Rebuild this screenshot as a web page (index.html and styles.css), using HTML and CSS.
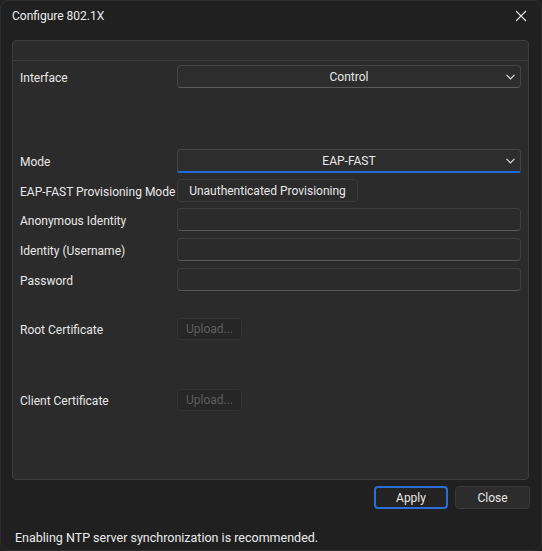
FILE: index.html
```html
<!DOCTYPE html>
<html>
	<head>
		<meta charset="utf-8">
		<title>Configure 802.1X</title>
		<link rel="stylesheet" href="styles.css">
	</head>
	<body>
		<div class="window">
			<div class="titlebar">
				<span class="title">Configure 802.1X</span>
				<svg class="close-x" width="12" height="12" viewBox="0 0 12 12">
					<path d="M1 1 L11 11 M11 1 L1 11" stroke="#e8e8e8" stroke-width="1.1" fill="none"/>
				</svg>
			</div>
			<div class="group">
				<div class="group-head"></div>
				<div class="group-body">
					<div class="row r-interface">
						<span class="label">Interface</span>
						<div class="combo">
							<span>Control</span>
							<svg class="chev" width="9" height="6" viewBox="0 0 9 6"><path d="M0.5 0.8 L4.5 4.8 L8.5 0.8" stroke="#e0e0e0" stroke-width="1.2" fill="none"/></svg>
						</div>
					</div>
					<div class="row r-mode">
						<span class="label">Mode</span>
						<div class="combo focus">
							<span>EAP-FAST</span>
							<svg class="chev" width="9" height="6" viewBox="0 0 9 6"><path d="M0.5 0.8 L4.5 4.8 L8.5 0.8" stroke="#e0e0e0" stroke-width="1.2" fill="none"/></svg>
						</div>
					</div>
					<div class="row r-prov">
						<span class="label">EAP-FAST Provisioning Mode</span>
						<div class="btn prov">Unauthenticated Provisioning</div>
					</div>
					<div class="row r-field first">
						<span class="label">Anonymous Identity</span>
						<div class="input"></div>
					</div>
					<div class="row r-field">
						<span class="label">Identity (Username)</span>
						<div class="input"></div>
					</div>
					<div class="row r-field">
						<span class="label">Password</span>
						<div class="input"></div>
					</div>
					<div class="row r-root">
						<span class="label">Root Certificate</span>
						<div class="btn upload">Upload...</div>
					</div>
					<div class="row r-client">
						<span class="label">Client Certificate</span>
						<div class="btn upload">Upload...</div>
					</div>
				</div>
			</div>
			<div class="actions">
				<div class="btn apply">Apply</div>
				<div class="btn close">Close</div>
			</div>
			<div class="status">Enabling NTP server synchronization is recommended.</div>
		</div>
	</body>
</html>
```

FILE: styles.css
```css
*{
	margin: 0;
	padding: 0;
	box-sizing: border-box;
}

body{
	background-color: #202020;
	font-family: Roboto, "Noto Sans", sans-serif;
	font-size: 12px;
	color: #e8e8e8;
}

.window{
	width: 542px;
	height: 551px;
	background-color: #202020;
	border: 1px solid #2e2e2e;
	border-radius: 8px;
	overflow: hidden;
}

.titlebar{
	height: 29px;
	display: flex;
	align-items: center;
	justify-content: space-between;
	padding: 0 14px 0 11px;
}

.titlebar .title{
	font-size: 12px;
	color: #ececec;
}

.group{
	margin: 10px 12px 0 11px;
	height: 440px;
	background-color: #2b2b2b;
	border: 1px solid #3d3d3d;
	border-radius: 4px;
}

.group-head{
	height: 20px;
	border-bottom: 1px solid #3d3d3d;
}

.group-body{
	padding: 4px 7px 0 7px;
}

.row{
	display: grid;
	grid-template-columns: 157px 1fr;
	align-items: center;
	justify-items: start;
}

.row .label{
	color: #e8e8e8;
	white-space: nowrap;
	padding-top: 2px;
}

.r-mode{ margin-top: 61px; }
.r-prov{ margin-top: 6px; }
.r-field{ margin-top: 7px; }
.r-field.first{ margin-top: 6px; }
.r-root{ margin-top: 27px; }
.r-client{ margin-top: 49px; }

.combo{
	position: relative;
	justify-self: stretch;
	height: 23px;
	background-color: #2d2d2d;
	border: 1px solid #444444;
	border-bottom-color: #5a5a5a;
	border-radius: 4px;
	display: flex;
	align-items: center;
	justify-content: center;
}

.combo.focus{
	height: 24px;
	border-bottom: 2px solid #1f6ad6;
	border-radius: 4px 4px 2px 2px;
}

.combo .chev{
	position: absolute;
	right: 5px;
	top: 8px;
}

.input{
	justify-self: stretch;
	height: 23px;
	background-color: #2b2b2b;
	border: 1px solid #3e3e3e;
	border-bottom-color: #575757;
	border-radius: 4px;
}

.btn{
	height: 22px;
	border: 1px solid #3a3a3a;
	border-radius: 4px;
	background-color: #2b2b2b;
	display: flex;
	align-items: center;
	justify-content: center;
}

.btn.prov{
	width: 181px;
	height: 23px;
}

.btn.upload{
	width: 65px;
	background-color: #262626;
	border-color: #333333;
	color: #5e5e5e;
}

.actions{
	display: flex;
	justify-content: flex-end;
	gap: 7px;
	padding: 6px 11px 0 0;
}

.actions .btn{
	width: 75px;
	height: 23px;
}

.btn.apply{
	width: 74px;
	border: 2px solid #2a6fd6;
	background-color: #232323;
}

.btn.close{
	background-color: #2c2c2c;
	border-color: #383838;
}

.status{
	margin-top: 21px;
	padding-left: 14px;
	font-size: 12.5px;
	color: #ececec;
}
```
